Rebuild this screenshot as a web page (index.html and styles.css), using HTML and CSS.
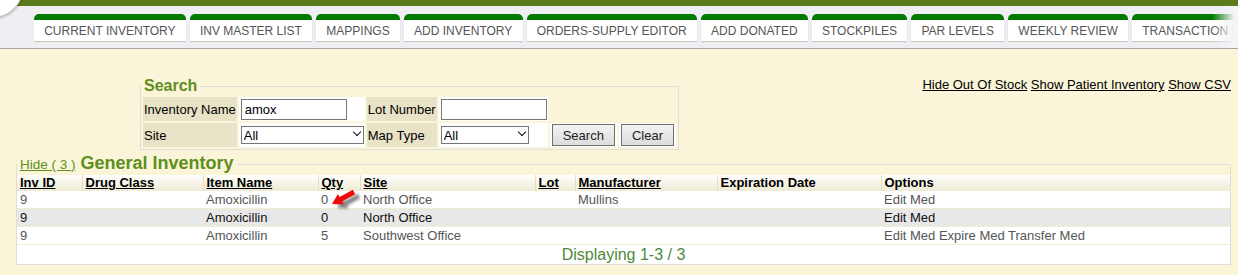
FILE: index.html
```html
<!DOCTYPE html>
<html lang="en">
<head>
    <meta charset="UTF-8">
    <meta name="viewport" content="width=device-width, initial-scale=1.0">
    <title>Current Inventory</title>
    <link rel="stylesheet" href="styles.css">
</head>
<body>
    <div class="header">
        <div class="logo"></div>
        <div class="topbar"></div>
        <ul class="tabs">
            <li><a href="#">CURRENT INVENTORY</a></li>
            <li><a href="#">INV MASTER LIST</a></li>
            <li><a href="#">MAPPINGS</a></li>
            <li><a href="#">ADD INVENTORY</a></li>
            <li><a href="#">ORDERS-SUPPLY EDITOR</a></li>
            <li><a href="#">ADD DONATED</a></li>
            <li><a href="#">STOCKPILES</a></li>
            <li><a href="#">PAR LEVELS</a></li>
            <li><a href="#">WEEKLY REVIEW</a></li>
            <li><a href="#">TRANSACTION REPORTS</a></li>
        </ul>
        <div class="fade"></div>
    </div>

    <div class="main">
        <div class="search-row">
            <fieldset class="search">
                <legend>Search</legend>
                <table class="search-table">
                    <tr>
                        <td class="lbl">Inventory Name</td>
                        <td class="val"><input type="text" class="txt" value="amox"></td>
                        <td class="lbl">Lot Number</td>
                        <td class="val"><input type="text" class="txt" value=""></td>
                    </tr>
                    <tr>
                        <td class="lbl">Site</td>
                        <td class="val">
                            <span class="select site"><select><option>All</option></select></span>
                        </td>
                        <td class="lbl">Map Type</td>
                        <td class="val">
                            <span class="select map"><select><option>All</option></select></span>
                        </td>
                        <td class="val"><button type="button">Search</button></td>
                        <td class="val"><button type="button">Clear</button></td>
                    </tr>
                </table>
            </fieldset>
            <div class="links">
                <a href="#">Hide Out Of Stock</a> <a href="#">Show Patient Inventory</a> <a href="#">Show CSV</a>
            </div>
        </div>

        <fieldset class="inventory">
            <legend><a href="#" class="hide">Hide ( 3 )</a> <span class="title">General Inventory</span></legend>
            <table class="grid">
                <thead>
                    <tr>
                        <th class="c-id"><a href="#">Inv ID</a></th>
                        <th class="c-class"><a href="#">Drug Class</a></th>
                        <th class="c-item"><a href="#">Item Name</a></th>
                        <th class="c-qty"><a href="#">Qty</a></th>
                        <th class="c-site"><a href="#">Site</a></th>
                        <th class="c-lot"><a href="#">Lot</a></th>
                        <th class="c-mfr"><a href="#">Manufacturer</a></th>
                        <th class="c-exp">Expiration Date</th>
                        <th>Options</th>
                    </tr>
                </thead>
                <tbody>
                    <tr>
                        <td>9</td><td></td><td>Amoxicillin</td><td>0</td><td>North Office</td><td></td><td>Mullins</td><td></td>
                        <td><a href="#">Edit Med</a></td>
                    </tr>
                    <tr class="alt">
                        <td>9</td><td></td><td>Amoxicillin</td><td>0</td><td>North Office</td><td></td><td></td><td></td>
                        <td><a href="#">Edit Med</a></td>
                    </tr>
                    <tr>
                        <td>9</td><td></td><td>Amoxicillin</td><td>5</td><td>Southwest Office</td><td></td><td></td><td></td>
                        <td><a href="#">Edit Med</a> <a href="#">Expire Med</a> <a href="#">Transfer Med</a></td>
                    </tr>
                </tbody>
                <tfoot>
                    <tr><td colspan="9">Displaying 1-3 / 3</td></tr>
                </tfoot>
            </table>
        </fieldset>
    </div>

    <!-- red pointer drawn over the qty column -->
    <svg class="pointer" width="40" height="30" viewBox="0 0 40 30">
        <defs>
            <filter id="soft" x="-50%" y="-50%" width="200%" height="200%">
                <feGaussianBlur stdDeviation="1.6"/>
            </filter>
        </defs>
        <polygon transform="translate(5 4)" filter="url(#soft)" fill="#5a5a5a" opacity="0.75"
                 points="6,18 17.65,18.48 15.98,15.41 29.2,8.2 26.8,3.8 13.58,11.02 11.91,7.94"/>
        <polygon fill="#ee0a0a"
                 points="6,18 17.65,18.48 15.98,15.41 29.2,8.2 26.8,3.8 13.58,11.02 11.91,7.94"/>
    </svg>
</body>
</html>
```

FILE: styles.css
```css
body {
    margin: 0;
    font-family: "Liberation Sans", Arial, sans-serif;
    font-size: 13px;
    background-color: #faf5d8;
    color: #000;
}

/* header band */
.header {
    position: relative;
    background-color: #eeeef3;
    border-bottom: 1px solid #a6a6a6;
    overflow: hidden;
}
.topbar {
    height: 6px;
    background-color: #5c7b1b;
}
.logo {
    position: absolute;
    left: -40px;
    top: -46px;
    width: 62px;
    height: 62px;
    border-radius: 50%;
    background-color: #fff;
    border: 1px solid #c9c9c9;
    box-shadow: 0 1px 3px rgba(0,0,0,0.25);
}
.tabs {
    list-style: none;
    margin: 0;
    padding: 8px 0 7px 34px;
    display: flex;
    gap: 4px;
    white-space: nowrap;
}
.tabs li {
    flex: none;
}
.tabs a {
    display: block;
    height: 21px;
    line-height: 22px;
    padding: 0 10.2px;
    background-color: #fff;
    border-top: 6px solid #007a00;
    border-radius: 5px 5px 0 0;
    color: #555;
    font-size: 12px;
    text-decoration: none;
    box-shadow: 0 1px 1px rgba(70,120,50,0.3);
}
.fade {
    position: absolute;
    right: 0;
    top: 6px;
    bottom: 0;
    width: 26px;
    background: linear-gradient(to right, rgba(244,244,247,0), #f4f4f7 85%);
}

/* content */
.main {
    padding: 28px 7px 0 16px;
}
.search-row {
    display: flex;
    align-items: flex-start;
    justify-content: space-between;
}
fieldset {
    margin: 0;
    padding: 0;
    border: 1px solid #dedede;
    min-width: 0;
}
.search {
    margin-left: 124px;
}
.search legend {
    padding: 0 3px;
    color: #5e8e1e;
    font-size: 16px;
    font-weight: bold;
    line-height: 18px;
}
.search-table {
    border-spacing: 2px;
}
.search-table td {
    height: 22px;
    padding: 1px;
    white-space: nowrap;
}
.search-table .lbl {
    background-color: #e8e3c6;
}
.search-table .val {
    background-color: #fff;
}
.txt {
    display: block;
    width: 106px;
    height: 21px;
    box-sizing: border-box;
    margin: 0 0 0 1px;
    padding: 0 3px;
    border: 1px solid #767676;
    font: 13px "Liberation Sans", Arial, sans-serif;
}
.select {
    position: relative;
    display: block;
    margin-left: 1px;
}
.select.site {
    width: 123px;
}
.select.map {
    width: 88px;
}
.select select {
    display: block;
    width: 100%;
    height: 18px;
    box-sizing: border-box;
    padding: 0 0 0 2px;
    border: 1px solid #767676;
    border-radius: 0;
    background-color: #fff;
    -webkit-appearance: none;
    appearance: none;
    font: 13px "Liberation Sans", Arial, sans-serif;
    color: #000;
}
.select::after {
    content: "";
    position: absolute;
    right: 4px;
    top: 3px;
    width: 5px;
    height: 5px;
    border-right: 1.5px solid #111;
    border-bottom: 1.5px solid #111;
    transform: rotate(45deg);
    pointer-events: none;
}
.search-table button {
    display: block;
    height: 22px;
    margin: 0 1px;
    padding: 0 10px;
    border: 1px solid #707070;
    background: linear-gradient(#f3f3f3, #dcdcdc);
    color: #222;
    font: 13px "Liberation Sans", Arial, sans-serif;
}
.links {
    line-height: 15px;
    white-space: nowrap;
}
.links a {
    color: #000;
}

/* inventory grid */
.inventory {
    margin-top: 3px;
}
.inventory legend {
    padding: 0 3px;
    font-size: 18px;
    line-height: 21px;
}
.inventory .title {
    color: #5e8e1e;
    font-weight: bold;
}
.hide {
    color: #5e8e1e;
    font-size: 13.5px;
}
.grid {
    width: 100%;
    border-collapse: collapse;
    table-layout: fixed;
}
.grid th {
    box-sizing: border-box;
    padding: 1px 3px;
    line-height: 14px;
    text-align: left;
    white-space: nowrap;
    background: linear-gradient(#fefefb, #eeead4);
    border-left: 1px solid #e4dec5;
}
.grid th:first-child {
    border-left: none;
}
.grid th a {
    color: #000;
}
.c-id { width: 65px; }
.c-class { width: 121px; }
.c-item { width: 115px; }
.c-qty { width: 42px; }
.c-site { width: 175px; }
.c-lot { width: 40px; }
.c-mfr { width: 142px; }
.c-exp { width: 164px; }

.grid tbody td {
    padding: 1px 3px;
    line-height: 15px;
    color: #555;
    background-color: #fff;
    border-bottom: 1px solid #f3eed2;
    white-space: nowrap;
}
.grid tbody tr.alt td {
    background-color: #e8e8e8;
    color: #111;
}
.grid tbody td a {
    color: inherit;
    text-decoration: none;
}
.grid tfoot td {
    padding: 0;
    height: 19px;
    line-height: 19px;
    text-align: center;
    font-size: 16px;
    color: #4d8a3b;
    background-color: #fff;
}

.pointer {
    position: absolute;
    left: 326px;
    top: 186px;
}
```
